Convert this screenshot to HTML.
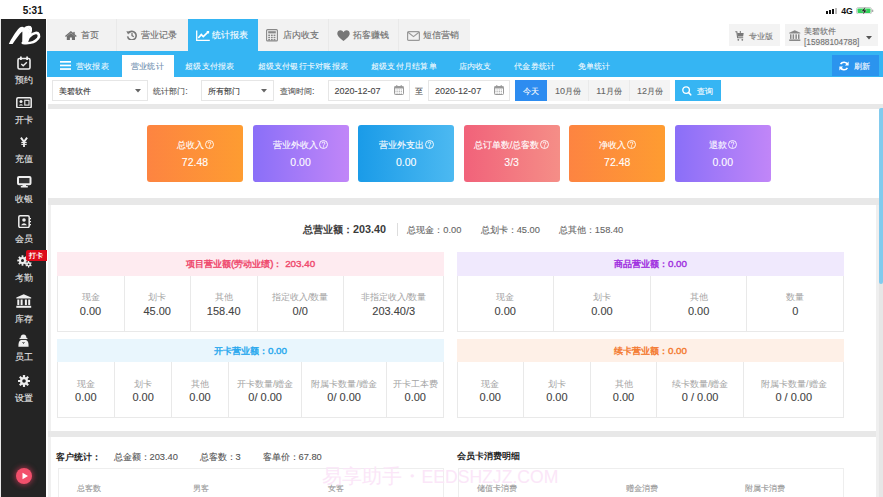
<!DOCTYPE html>
<html><head><meta charset="utf-8"><style>
html,body{margin:0;padding:0;width:883px;height:497px;overflow:hidden;background:#fff;font-family:"Liberation Sans",sans-serif;}
.t{position:absolute;white-space:nowrap;line-height:40px;height:40px;-webkit-text-stroke:0.1px currentColor;}
.r{position:absolute;}
</style></head><body>
<div class="t" style="left:-167.30px;top:-9.05px;width:400px;text-align:center;font-size:10px;color:#111;font-weight:bold;-webkit-text-stroke:0;-webkit-text-stroke:0">5:31</div>
<div class="r" style="left:826.0px;top:11.0px;width:2.10px;height:2.50px;background:#111;"></div>
<div class="r" style="left:829.1px;top:10.0px;width:2.10px;height:3.50px;background:#111;"></div>
<div class="r" style="left:832.2px;top:9.0px;width:2.10px;height:4.50px;background:#111;"></div>
<div class="r" style="left:835.3px;top:7.5px;width:2.10px;height:6.00px;background:#bbb;"></div>
<div class="t" style="left:647.00px;top:-8.85px;width:400px;text-align:center;font-size:8.8px;color:#111;font-weight:bold;-webkit-text-stroke:0;-webkit-text-stroke:0">4G</div>
<svg class="r" style="left:855.5px;top:6.5px" width="18" height="7.5" viewBox="0 0 18 7.5"><rect x="0.5" y="0.5" width="15" height="6.5" rx="1.8" fill="none" stroke="#bbb" stroke-width="0.8"/><rect x="1.5" y="1.5" width="13" height="4.5" rx="0.8" fill="#2fd158"/><rect x="16" y="2.5" width="1.3" height="2.5" rx="0.5" fill="#aaa"/><path d="M9.6 -0.3 L5.3 4.2 L7.8 4.2 L6.6 7.9 L11 3.2 L8.5 3.2 Z" fill="#111" stroke="#fff" stroke-width="0.35"/></svg>
<div class="r" style="left:0px;top:19px;width:1.00px;height:478.00px;background:#e9e9e9;"></div>
<div class="r" style="left:1px;top:19px;width:45.40px;height:478.00px;background:#242424;"></div>
<div class="r" style="left:47px;top:19px;width:423.00px;height:32.00px;background:#f2f2f2;"></div>
<div class="r" style="left:116px;top:19px;width:1.00px;height:32.00px;background:#e9e9e9;"></div>
<div class="r" style="left:188px;top:19px;width:1.00px;height:32.00px;background:#e9e9e9;"></div>
<div class="r" style="left:328px;top:19px;width:1.00px;height:32.00px;background:#e9e9e9;"></div>
<div class="r" style="left:398px;top:19px;width:1.00px;height:32.00px;background:#e9e9e9;"></div>
<div class="r" style="left:188px;top:19px;width:70.00px;height:32.00px;background:#35b5f3;"></div>
<div class="r" style="left:729px;top:24px;width:51.00px;height:22.00px;background:#f3f3f3;"></div>
<div class="r" style="left:785px;top:24px;width:93.00px;height:22.00px;background:#f3f3f3;"></div>
<div class="r" style="left:47px;top:51px;width:836.00px;height:26.00px;background:#35b5f3;"></div>
<div class="r" style="left:121.5px;top:55px;width:52.50px;height:22.00px;background:#ffffff;"></div>
<div class="r" style="left:832px;top:55px;width:47.00px;height:21.00px;background:#2b94ee;"></div>
<div class="r" style="left:47.8px;top:103.5px;width:835.20px;height:5.00px;background:#e8e8e8;"></div>
<div class="r" style="left:47.8px;top:198px;width:830.90px;height:6.50px;background:#e8e8e8;"></div>
<div class="r" style="left:47.8px;top:204.5px;width:3.40px;height:226.50px;background:#f0f0f0;"></div>
<div class="r" style="left:47.8px;top:431px;width:828.20px;height:6.00px;background:#e8e8e8;"></div>
<div class="r" style="left:47.8px;top:437px;width:3.40px;height:60.00px;background:#f0f0f0;"></div>
<div class="r" style="left:876px;top:204.5px;width:2.70px;height:292.50px;background:#efefef;"></div>
<div class="r" style="left:878.7px;top:108.5px;width:4.30px;height:388.50px;background:#e6e6e6;"></div>
<div class="r" style="left:878.7px;top:108.4px;width:4.3px;height:175.6px;background:#82cbee;border-radius:2px 0 2px 2px"></div>
<svg class="r" style="left:0px;top:19px" width="47" height="32" viewBox="0 19 47 32"><path d="M8.8 44.1 C11.3 39, 15.5 31.5, 19.5 27.8 C21.5 26.2, 24.6 26.3, 24.8 29.5 L24.6 43.6 L22.2 43.6 L22.4 31.2 C19.5 34, 15.2 40, 12.6 44 Z" fill="#fff"/><g fill="none" stroke="#fff" stroke-linecap="round" stroke-linejoin="round"><path d="M24 31 C25.3 27.8, 28 26.8, 30 27.6 C31.5 28.6, 30.5 33, 27 40.5" stroke-width="3.2"/><path d="M22.8 43 C28.5 43.6, 35 42.2, 38 38.5 C40 35.5, 38.8 32.6, 35.5 33 C33 33.3, 31 34.8, 29.6 36.4" stroke-width="2.7"/></g><path d="M23.2 29.5 L29.5 28.3 L27.8 40.5 L24.5 43 L23 43 Z" fill="#fff"/></svg>
<div class="t" style="left:-176.00px;top:59.95px;width:400px;text-align:center;font-size:10px;color:#e6e6e6;font-weight:normal;"><span style="font-size:9.20px">预约</span></div>
<div class="t" style="left:-176.00px;top:99.75px;width:400px;text-align:center;font-size:10px;color:#e6e6e6;font-weight:normal;"><span style="font-size:9.20px">开卡</span></div>
<div class="t" style="left:-176.00px;top:138.95px;width:400px;text-align:center;font-size:10px;color:#e6e6e6;font-weight:normal;"><span style="font-size:9.20px">充值</span></div>
<div class="t" style="left:-176.00px;top:178.75px;width:400px;text-align:center;font-size:10px;color:#e6e6e6;font-weight:normal;"><span style="font-size:9.20px">收银</span></div>
<div class="t" style="left:-176.00px;top:219.05px;width:400px;text-align:center;font-size:10px;color:#e6e6e6;font-weight:normal;"><span style="font-size:9.20px">会员</span></div>
<div class="t" style="left:-176.00px;top:258.35px;width:400px;text-align:center;font-size:10px;color:#e6e6e6;font-weight:normal;"><span style="font-size:9.20px">考勤</span></div>
<div class="t" style="left:-176.00px;top:298.85px;width:400px;text-align:center;font-size:10px;color:#e6e6e6;font-weight:normal;"><span style="font-size:9.20px">库存</span></div>
<div class="t" style="left:-176.00px;top:337.25px;width:400px;text-align:center;font-size:10px;color:#e6e6e6;font-weight:normal;"><span style="font-size:9.20px">员工</span></div>
<div class="t" style="left:-176.00px;top:378.25px;width:400px;text-align:center;font-size:10px;color:#e6e6e6;font-weight:normal;"><span style="font-size:9.20px">设置</span></div>
<svg class="r" style="left:17px;top:56px" width="14" height="14" viewBox="0 0 14 14"><rect x="1" y="2.5" width="12" height="10.5" rx="1.5" fill="none" stroke="#eee" stroke-width="1.6"/><rect x="3" y="0.5" width="1.8" height="3.5" fill="#eee"/><rect x="9.2" y="0.5" width="1.8" height="3.5" fill="#eee"/><path d="M4.3 8 L6.2 9.8 L9.8 6.2" fill="none" stroke="#eee" stroke-width="1.4"/></svg>
<svg class="r" style="left:16px;top:96.5px" width="16" height="11.5" viewBox="0 0 16 11.5"><rect x="0.8" y="0.8" width="14.4" height="9.9" rx="1.2" fill="none" stroke="#eee" stroke-width="1.5"/><circle cx="5" cy="4.6" r="1.5" fill="#eee"/><path d="M2.8 8.6 Q5 5.8 7.2 8.6 Z" fill="#eee"/><rect x="8.8" y="3.3" width="4.2" height="4.8" fill="none" stroke="#eee" stroke-width="1.1"/></svg>
<svg class="r" style="left:20px;top:136.5px" width="8" height="10" viewBox="0 0 8 10"><path d="M0.9 0.6 L4 4.8 L7.1 0.6" fill="none" stroke="#eee" stroke-width="1.9"/><rect x="1.3" y="4.9" width="5.4" height="1.1" fill="#eee"/><rect x="1.3" y="6.8" width="5.4" height="1.1" fill="#eee"/><rect x="3.1" y="4.3" width="1.8" height="5.7" fill="#eee"/></svg>
<svg class="r" style="left:17.3px;top:176px" width="14.5" height="11.5" viewBox="0 0 14.5 11.5"><rect x="1" y="1" width="12.5" height="7.3" rx="1" fill="#333" stroke="#eee" stroke-width="2"/><rect x="5.5" y="8.4" width="3.5" height="2" fill="#eee"/><rect x="3.8" y="10" width="7" height="1.5" fill="#eee"/></svg>
<svg class="r" style="left:18px;top:214.5px" width="13" height="13.2" viewBox="0 0 13 13.2"><rect x="0.8" y="0.8" width="10.4" height="11.6" rx="1.3" fill="none" stroke="#eee" stroke-width="1.5"/><circle cx="6" cy="5" r="1.8" fill="#eee"/><path d="M3 10.2 Q6 6.3 9 10.2 Z" fill="#eee"/><rect x="11.5" y="3" width="1.5" height="1.3" fill="#eee"/><rect x="11.5" y="6" width="1.5" height="1.3" fill="#eee"/><rect x="11.5" y="9" width="1.5" height="1.3" fill="#eee"/></svg>
<svg class="r" style="left:16.5px;top:255px" width="15.5" height="13" viewBox="0 0 15.5 13"><g fill="#eee"><circle cx="5.5" cy="5.5" r="3.6"/><rect x="4.6" y="0.3" width="1.8" height="2.6" transform="rotate(0 5.5 5.5)"/><rect x="4.6" y="0.3" width="1.8" height="2.6" transform="rotate(45 5.5 5.5)"/><rect x="4.6" y="0.3" width="1.8" height="2.6" transform="rotate(90 5.5 5.5)"/><rect x="4.6" y="0.3" width="1.8" height="2.6" transform="rotate(135 5.5 5.5)"/><rect x="4.6" y="0.3" width="1.8" height="2.6" transform="rotate(180 5.5 5.5)"/><rect x="4.6" y="0.3" width="1.8" height="2.6" transform="rotate(225 5.5 5.5)"/><rect x="4.6" y="0.3" width="1.8" height="2.6" transform="rotate(270 5.5 5.5)"/><rect x="4.6" y="0.3" width="1.8" height="2.6" transform="rotate(315 5.5 5.5)"/><circle cx="11.6" cy="9.3" r="2.3"/><rect x="11" y="6.0" width="1.2" height="1.8" transform="rotate(0 11.6 9.3)"/><rect x="11" y="6.0" width="1.2" height="1.8" transform="rotate(60 11.6 9.3)"/><rect x="11" y="6.0" width="1.2" height="1.8" transform="rotate(120 11.6 9.3)"/><rect x="11" y="6.0" width="1.2" height="1.8" transform="rotate(180 11.6 9.3)"/><rect x="11" y="6.0" width="1.2" height="1.8" transform="rotate(240 11.6 9.3)"/><rect x="11" y="6.0" width="1.2" height="1.8" transform="rotate(300 11.6 9.3)"/></g><circle cx="5.5" cy="5.5" r="1.5" fill="#232323"/><circle cx="11.6" cy="9.3" r="0.9" fill="#232323"/></svg>
<div class="r" style="left:25.7px;top:249.8px;width:21.00px;height:10.80px;background:#dc0a1a;border-radius:2px 0 0 2px"></div>
<div class="t" style="left:-163.60px;top:236.15px;width:400px;text-align:center;font-size:8px;color:#fff;font-weight:bold;-webkit-text-stroke:0;"><span style="font-size:7.36px">打卡</span></div>
<svg class="r" style="left:16px;top:293.5px" width="15.5" height="14" viewBox="0 0 15.5 14"><path d="M7.75 0.3 L15.2 3.6 L15.2 4.6 L0.3 4.6 L0.3 3.6 Z" fill="#eee"/><rect x="1.3" y="5.5" width="2" height="5.6" fill="#eee"/><rect x="4.6" y="5.5" width="2" height="5.6" fill="#eee"/><rect x="8.9" y="5.5" width="2" height="5.6" fill="#eee"/><rect x="12.2" y="5.5" width="2" height="5.6" fill="#eee"/><rect x="0.3" y="11.8" width="14.9" height="2" fill="#eee"/></svg>
<svg class="r" style="left:18.3px;top:334px" width="11" height="13" viewBox="0 0 11 13"><path d="M2.5 4.5 Q2.5 0.4 5.5 0.4 Q8.5 0.4 8.5 4.5 Z" fill="#eee"/><rect x="1.6" y="3.9" width="7.8" height="1.2" fill="#eee"/><path d="M0.4 12.8 Q0.2 6.8 3 6 L8 6 Q10.8 6.8 10.6 12.8 Z" fill="#eee"/><path d="M4.6 8 L5.5 9.5 L6.4 8" stroke="#232323" stroke-width="0.8" fill="none"/></svg>
<svg class="r" style="left:18px;top:374.5px" width="12" height="12" viewBox="0 0 12 12"><g fill="#eee"><circle cx="6" cy="6" r="4"/><rect x="4.9" y="0" width="2.2" height="3" rx="0.4" transform="rotate(0 6 6)"/><rect x="4.9" y="0" width="2.2" height="3" rx="0.4" transform="rotate(45 6 6)"/><rect x="4.9" y="0" width="2.2" height="3" rx="0.4" transform="rotate(90 6 6)"/><rect x="4.9" y="0" width="2.2" height="3" rx="0.4" transform="rotate(135 6 6)"/><rect x="4.9" y="0" width="2.2" height="3" rx="0.4" transform="rotate(180 6 6)"/><rect x="4.9" y="0" width="2.2" height="3" rx="0.4" transform="rotate(225 6 6)"/><rect x="4.9" y="0" width="2.2" height="3" rx="0.4" transform="rotate(270 6 6)"/><rect x="4.9" y="0" width="2.2" height="3" rx="0.4" transform="rotate(315 6 6)"/></g><circle cx="6" cy="6" r="1.8" fill="#232323"/></svg>
<div class="r" style="left:16px;top:468px;width:16px;height:16px;border-radius:50%;background:#f2506c;box-shadow:0 0 5px 1.5px rgba(240,60,95,0.5)"></div>
<svg class="r" style="left:21px;top:472px" width="8" height="8" viewBox="0 0 8 8"><path d="M1.5 0.8 L7 4 L1.5 7.2 Z" fill="#fff"/></svg>
<div class="t" style="left:-110.50px;top:15.05px;width:400px;text-align:center;font-size:9.8px;color:#6a6a6a;font-weight:normal;"><span style="font-size:9.02px">首页</span></div>
<div class="t" style="left:-40.70px;top:15.05px;width:400px;text-align:center;font-size:9.8px;color:#6a6a6a;font-weight:normal;"><span style="font-size:9.02px">营业记录</span></div>
<div class="t" style="left:29.80px;top:15.05px;width:400px;text-align:center;font-size:9.8px;color:#fff;font-weight:normal;"><span style="font-size:9.02px">统计报表</span></div>
<div class="t" style="left:100.50px;top:15.05px;width:400px;text-align:center;font-size:9.8px;color:#6a6a6a;font-weight:normal;"><span style="font-size:9.02px">店内收支</span></div>
<div class="t" style="left:171.00px;top:15.05px;width:400px;text-align:center;font-size:9.8px;color:#6a6a6a;font-weight:normal;"><span style="font-size:9.02px">拓客赚钱</span></div>
<div class="t" style="left:241.00px;top:15.05px;width:400px;text-align:center;font-size:9.8px;color:#6a6a6a;font-weight:normal;"><span style="font-size:9.02px">短信营销</span></div>
<svg class="r" style="left:64.8px;top:30.6px" width="11.8" height="9.2" viewBox="0 0 11.8 9.2"><path d="M0 4.9 L5.9 0 L11.8 4.9 L10.9 5.9 L5.9 1.8 L0.9 5.9 Z" fill="#6f6f6f"/><path d="M1.8 5.2 L5.9 1.9 L10 5.2 L10 9.2 L6.9 9.2 L6.9 6.6 L4.9 6.6 L4.9 9.2 L1.8 9.2 Z" fill="#6f6f6f"/><rect x="8.3" y="0.9" width="1.4" height="2.6" fill="#6f6f6f"/></svg>
<svg class="r" style="left:126px;top:29.8px" width="11" height="10.5" viewBox="0 0 11 10.5"><path d="M2.3 3.2 A4.3 4.3 0 1 1 1.6 6.4" fill="none" stroke="#777" stroke-width="1.6"/><path d="M0.3 1.2 L3.8 1.6 L2.2 4.6 Z" fill="#777"/><path d="M6 3 L6 5.6 L7.8 6.8" fill="none" stroke="#777" stroke-width="1.3"/></svg>
<svg class="r" style="left:196px;top:29.5px" width="14" height="11" viewBox="0 0 14 11"><path d="M0.7 0.5 L0.7 10.3 L13.8 10.3" fill="none" stroke="#fff" stroke-width="1.3"/><path d="M2.3 8 L5.3 4.6 L7.3 6.6 L12.5 1.6" fill="none" stroke="#fff" stroke-width="1.7"/><path d="M10.3 1.1 L13.2 1 L13 3.9 Z" fill="#fff"/></svg>
<svg class="r" style="left:266px;top:29px" width="12" height="12.5" viewBox="0 0 12 12.5"><rect x="0.6" y="0.6" width="10.8" height="11.3" rx="1" fill="none" stroke="#888" stroke-width="1.1"/><rect x="2.2" y="2.2" width="7.6" height="2.2" fill="#888"/><rect x="2.2" y="5.6" width="1.8" height="1.4" fill="#888"/><rect x="2.2" y="7.8" width="1.8" height="1.4" fill="#888"/><rect x="2.2" y="10.0" width="1.8" height="1.4" fill="#888"/><rect x="4.9" y="5.6" width="1.8" height="1.4" fill="#888"/><rect x="4.9" y="7.8" width="1.8" height="1.4" fill="#888"/><rect x="4.9" y="10.0" width="1.8" height="1.4" fill="#888"/><rect x="7.6" y="5.6" width="1.8" height="1.4" fill="#888"/><rect x="7.6" y="7.8" width="1.8" height="1.4" fill="#888"/><rect x="7.6" y="10.0" width="1.8" height="1.4" fill="#888"/></svg>
<svg class="r" style="left:336.8px;top:29.8px" width="13" height="11.5" viewBox="0 0 13 11.5"><path d="M6.5 11 C3 8 0.3 6 0.3 3.4 C0.3 1.3 1.9 0.3 3.4 0.3 C4.8 0.3 5.9 1.2 6.5 2.2 C7.1 1.2 8.2 0.3 9.6 0.3 C11.1 0.3 12.7 1.3 12.7 3.4 C12.7 6 10 8 6.5 11 Z" fill="#777"/></svg>
<svg class="r" style="left:407px;top:30.5px" width="13" height="10" viewBox="0 0 13 10"><rect x="0.6" y="0.6" width="11.8" height="8.8" rx="1" fill="none" stroke="#999" stroke-width="1.2"/><path d="M1 1.2 L6.5 5.6 L12 1.2" fill="none" stroke="#999" stroke-width="1.2"/></svg>
<svg class="r" style="left:734.8px;top:30.5px" width="9" height="10" viewBox="0 0 9 10"><path d="M0.3 0.8 L1.8 0.8 L2.6 6.8 L8.2 6.8" fill="none" stroke="#777" stroke-width="1.1"/><path d="M2.2 2 L8.7 2 L8.1 5.6 L2.7 5.6 Z" fill="#777"/><rect x="4.8" y="0" width="1" height="2.5" fill="#777"/><circle cx="3.3" cy="8.8" r="0.9" fill="#777"/><circle cx="7.3" cy="8.8" r="0.9" fill="#777"/></svg>
<div class="t" style="left:560.50px;top:16.15px;width:400px;text-align:center;font-size:9px;color:#7a7a7a;font-weight:normal;"><span style="font-size:8.28px">专业版</span></div>
<svg class="r" style="left:789px;top:29.5px" width="11.5" height="11" viewBox="0 0 11.5 11"><path d="M5.75 0.2 L11.3 2.8 L11.3 3.6 L0.2 3.6 L0.2 2.8 Z" fill="#888"/><rect x="1" y="4.3" width="1.5" height="4.6" fill="#888"/><rect x="3.6" y="4.3" width="1.5" height="4.6" fill="#888"/><rect x="6.4" y="4.3" width="1.5" height="4.6" fill="#888"/><rect x="9" y="4.3" width="1.5" height="4.6" fill="#888"/><rect x="0.2" y="9.4" width="11.1" height="1.6" fill="#888"/></svg>
<div class="t" style="left:804.00px;top:11.05px;font-size:9px;color:#707070;font-weight:normal;"><span style="font-size:8.28px">美碧软件</span></div>
<div class="t" style="left:804.00px;top:21.95px;font-size:8.3px;color:#707070;font-weight:normal;">[15988104788]</div>
<svg class="r" style="left:865.5px;top:35.5px" width="6" height="4" viewBox="0 0 6 4"><path d="M0 0 L6 0 L3 3.5 Z" fill="#555"/></svg>
<svg class="r" style="left:60px;top:61px" width="11" height="9" viewBox="0 0 11 9"><rect x="0" y="0" width="11" height="1.7" fill="#fff"/><rect x="0" y="3.6" width="11" height="1.7" fill="#fff"/><rect x="0" y="7.2" width="11" height="1.7" fill="#fff"/></svg>
<div class="t" style="left:-107.50px;top:45.95px;width:400px;text-align:center;font-size:8.7px;color:rgba(255,255,255,0.93);font-weight:normal;letter-spacing:0.22px"><span style="font-size:8.26px">营收报表</span></div>
<div class="t" style="left:-52.70px;top:46.15px;width:400px;text-align:center;font-size:8.7px;color:#6f8fb0;font-weight:normal;letter-spacing:0.22px"><span style="font-size:8.26px">营业统计</span></div>
<div class="t" style="left:9.80px;top:45.95px;width:400px;text-align:center;font-size:8.7px;color:rgba(255,255,255,0.93);font-weight:normal;letter-spacing:0.22px"><span style="font-size:8.26px">超级支付报表</span></div>
<div class="t" style="left:102.80px;top:45.95px;width:400px;text-align:center;font-size:8.7px;color:rgba(255,255,255,0.93);font-weight:normal;letter-spacing:0.22px"><span style="font-size:8.26px">超级支付银行卡对账报表</span></div>
<div class="t" style="left:203.90px;top:45.95px;width:400px;text-align:center;font-size:8.7px;color:rgba(255,255,255,0.93);font-weight:normal;letter-spacing:0.22px"><span style="font-size:8.26px">超级支付月结算单</span></div>
<div class="t" style="left:275.20px;top:45.95px;width:400px;text-align:center;font-size:8.7px;color:rgba(255,255,255,0.93);font-weight:normal;letter-spacing:0.22px"><span style="font-size:8.26px">店内收支</span></div>
<div class="t" style="left:334.70px;top:45.95px;width:400px;text-align:center;font-size:8.7px;color:rgba(255,255,255,0.93);font-weight:normal;letter-spacing:0.22px"><span style="font-size:8.26px">代金券统计</span></div>
<div class="t" style="left:394.00px;top:45.95px;width:400px;text-align:center;font-size:8.7px;color:rgba(255,255,255,0.93);font-weight:normal;letter-spacing:0.22px"><span style="font-size:8.26px">免单统计</span></div>
<svg class="r" style="left:839px;top:60.5px" width="10" height="10" viewBox="0 0 10 10"><path d="M8.6 3.6 A3.9 3.9 0 0 0 1.6 3.2" fill="none" stroke="#fff" stroke-width="1.6"/><path d="M9.6 0.6 L9.6 4.4 L5.9 4.4 Z" fill="#fff"/><path d="M1.4 6.4 A3.9 3.9 0 0 0 8.4 6.8" fill="none" stroke="#fff" stroke-width="1.6"/><path d="M0.4 9.4 L0.4 5.6 L4.1 5.6 Z" fill="#fff"/></svg>
<div class="t" style="left:661.50px;top:46.25px;width:400px;text-align:center;font-size:8.7px;color:#fff;font-weight:normal;"><span style="font-size:8.00px">刷新</span></div>
<div class="r" style="left:52px;top:80px;width:96.00px;height:20.60px;background:#fff;box-sizing:border-box;border:1px solid #e6e6e6"></div>
<div class="t" style="left:58.70px;top:71.25px;font-size:9px;color:#333;font-weight:normal;"><span style="font-size:8.28px">美碧软件</span></div>
<svg class="r" style="left:135px;top:88.8px" width="6" height="4" viewBox="0 0 6 4"><path d="M0 0 L6 0 L3 3.5 Z" fill="#666"/></svg>
<div class="t" style="left:-29.50px;top:71.25px;width:400px;text-align:center;font-size:9px;color:#555;font-weight:normal;"><span style="font-size:8.28px">统计部门</span>:</div>
<div class="r" style="left:201px;top:80px;width:73.00px;height:20.60px;background:#fff;box-sizing:border-box;border:1px solid #e6e6e6"></div>
<div class="t" style="left:207.70px;top:71.25px;font-size:9px;color:#333;font-weight:normal;"><span style="font-size:8.28px">所有部门</span></div>
<svg class="r" style="left:260.5px;top:88.8px" width="6" height="4" viewBox="0 0 6 4"><path d="M0 0 L6 0 L3 3.5 Z" fill="#666"/></svg>
<div class="t" style="left:97.30px;top:71.25px;width:400px;text-align:center;font-size:9px;color:#555;font-weight:normal;"><span style="font-size:8.28px">查询时间</span>:</div>
<div class="r" style="left:327.7px;top:80px;width:82.00px;height:20.60px;background:#fff;box-sizing:border-box;border:1px solid #e6e6e6"></div>
<div class="t" style="left:334.50px;top:71.25px;font-size:9px;color:#444;font-weight:normal;">2020-12-07</div>
<div class="r" style="left:428.4px;top:80px;width:81.90px;height:20.60px;background:#fff;box-sizing:border-box;border:1px solid #e6e6e6"></div>
<div class="t" style="left:435.10px;top:71.25px;font-size:9px;color:#444;font-weight:normal;">2020-12-07</div>
<div class="t" style="left:218.50px;top:71.25px;width:400px;text-align:center;font-size:9px;color:#555;font-weight:normal;"><span style="font-size:8.28px">至</span></div>
<svg class="r" style="left:393.9px;top:85px" width="10" height="10" viewBox="0 0 10 10"><rect x="0.5" y="1.5" width="9" height="8" rx="0.8" fill="none" stroke="#999" stroke-width="1"/><rect x="0.5" y="1.5" width="9" height="2" fill="#999"/><rect x="2.3" y="0" width="1" height="2.5" fill="#999"/><rect x="6.7" y="0" width="1" height="2.5" fill="#999"/><rect x="1.5" y="4.5" width="1" height="0.9" fill="#aaa"/><rect x="1.5" y="6.1" width="1" height="0.9" fill="#aaa"/><rect x="1.5" y="7.7" width="1" height="0.9" fill="#aaa"/><rect x="3.3" y="4.5" width="1" height="0.9" fill="#aaa"/><rect x="3.3" y="6.1" width="1" height="0.9" fill="#aaa"/><rect x="3.3" y="7.7" width="1" height="0.9" fill="#aaa"/><rect x="5.1" y="4.5" width="1" height="0.9" fill="#aaa"/><rect x="5.1" y="6.1" width="1" height="0.9" fill="#aaa"/><rect x="5.1" y="7.7" width="1" height="0.9" fill="#aaa"/><rect x="6.9" y="4.5" width="1" height="0.9" fill="#aaa"/><rect x="6.9" y="6.1" width="1" height="0.9" fill="#aaa"/><rect x="6.9" y="7.7" width="1" height="0.9" fill="#aaa"/></svg>
<svg class="r" style="left:494.2px;top:85px" width="10" height="10" viewBox="0 0 10 10"><rect x="0.5" y="1.5" width="9" height="8" rx="0.8" fill="none" stroke="#999" stroke-width="1"/><rect x="0.5" y="1.5" width="9" height="2" fill="#999"/><rect x="2.3" y="0" width="1" height="2.5" fill="#999"/><rect x="6.7" y="0" width="1" height="2.5" fill="#999"/><rect x="1.5" y="4.5" width="1" height="0.9" fill="#aaa"/><rect x="1.5" y="6.1" width="1" height="0.9" fill="#aaa"/><rect x="1.5" y="7.7" width="1" height="0.9" fill="#aaa"/><rect x="3.3" y="4.5" width="1" height="0.9" fill="#aaa"/><rect x="3.3" y="6.1" width="1" height="0.9" fill="#aaa"/><rect x="3.3" y="7.7" width="1" height="0.9" fill="#aaa"/><rect x="5.1" y="4.5" width="1" height="0.9" fill="#aaa"/><rect x="5.1" y="6.1" width="1" height="0.9" fill="#aaa"/><rect x="5.1" y="7.7" width="1" height="0.9" fill="#aaa"/><rect x="6.9" y="4.5" width="1" height="0.9" fill="#aaa"/><rect x="6.9" y="6.1" width="1" height="0.9" fill="#aaa"/><rect x="6.9" y="7.7" width="1" height="0.9" fill="#aaa"/></svg>
<div class="r" style="left:515.4px;top:80px;width:32.00px;height:20.50px;background:#2d8cf0;"></div>
<div class="t" style="left:331.40px;top:70.95px;width:400px;text-align:center;font-size:9px;color:#fff;font-weight:normal;"><span style="font-size:8.28px">今天</span></div>
<div class="r" style="left:547.4px;top:80px;width:123.00px;height:20.50px;background:#f4f4f4;"></div>
<div class="r" style="left:588.2px;top:80px;width:1.00px;height:20.50px;background:#eaeaea;"></div>
<div class="r" style="left:629.1px;top:80px;width:1.00px;height:20.50px;background:#eaeaea;"></div>
<div class="t" style="left:368.00px;top:70.95px;width:400px;text-align:center;font-size:9px;color:#666;font-weight:normal;">10<span style="font-size:8.28px">月份</span></div>
<div class="t" style="left:409.00px;top:70.95px;width:400px;text-align:center;font-size:9px;color:#666;font-weight:normal;">11<span style="font-size:8.28px">月份</span></div>
<div class="t" style="left:450.00px;top:70.95px;width:400px;text-align:center;font-size:9px;color:#666;font-weight:normal;">12<span style="font-size:8.28px">月份</span></div>
<div class="r" style="left:675.3px;top:80px;width:46.20px;height:20.50px;background:#36b5f3;"></div>
<svg class="r" style="left:681.7px;top:86px" width="10" height="10" viewBox="0 0 10 10"><circle cx="4.1" cy="4.1" r="3.3" fill="none" stroke="#fff" stroke-width="1.35"/><path d="M6.5 6.5 L8.7 8.8" stroke="#fff" stroke-width="1.6" stroke-linecap="round"/></svg>
<div class="t" style="left:504.50px;top:70.95px;width:400px;text-align:center;font-size:8.7px;color:#fff;font-weight:normal;"><span style="font-size:8.00px">查询</span></div>
<div class="r" style="left:147.0px;top:124.8px;width:96.00px;height:57.00px;background:linear-gradient(90deg,#fd8441,#fe9c31);border-radius:3px"></div>
<div class="t" style="left:-5.00px;top:125.15px;width:400px;text-align:center;font-size:9.5px;color:#fff;font-weight:normal;"><span style="font-size:8.74px">总收入</span><svg style="display:inline-block;vertical-align:-1px;margin-left:1px" width="9" height="9" viewBox="0 0 9 9"><circle cx="4.5" cy="4.5" r="4" fill="none" stroke="#fff" stroke-width="0.9"/><path d="M3.2 3.4 Q3.2 2.1 4.5 2.1 Q5.8 2.1 5.8 3.3 Q5.8 4.1 4.9 4.6 Q4.5 4.9 4.5 5.6" fill="none" stroke="#fff" stroke-width="0.9"/><circle cx="4.5" cy="6.9" r="0.55" fill="#fff"/></svg></div>
<div class="t" style="left:-5.00px;top:141.95px;width:400px;text-align:center;font-size:10.5px;color:#fff;font-weight:normal;">72.48</div>
<div class="r" style="left:252.55px;top:124.8px;width:96.00px;height:57.00px;background:linear-gradient(90deg,#8a6ff8,#c186f8);border-radius:3px"></div>
<div class="t" style="left:100.55px;top:125.15px;width:400px;text-align:center;font-size:9.5px;color:#fff;font-weight:normal;"><span style="font-size:8.74px">营业外收入</span><svg style="display:inline-block;vertical-align:-1px;margin-left:1px" width="9" height="9" viewBox="0 0 9 9"><circle cx="4.5" cy="4.5" r="4" fill="none" stroke="#fff" stroke-width="0.9"/><path d="M3.2 3.4 Q3.2 2.1 4.5 2.1 Q5.8 2.1 5.8 3.3 Q5.8 4.1 4.9 4.6 Q4.5 4.9 4.5 5.6" fill="none" stroke="#fff" stroke-width="0.9"/><circle cx="4.5" cy="6.9" r="0.55" fill="#fff"/></svg></div>
<div class="t" style="left:100.55px;top:141.95px;width:400px;text-align:center;font-size:10.5px;color:#fff;font-weight:normal;">0.00</div>
<div class="r" style="left:358.1px;top:124.8px;width:96.00px;height:57.00px;background:linear-gradient(90deg,#1a9be8,#4cb9f1);border-radius:3px"></div>
<div class="t" style="left:206.10px;top:125.15px;width:400px;text-align:center;font-size:9.5px;color:#fff;font-weight:normal;"><span style="font-size:8.74px">营业外支出</span><svg style="display:inline-block;vertical-align:-1px;margin-left:1px" width="9" height="9" viewBox="0 0 9 9"><circle cx="4.5" cy="4.5" r="4" fill="none" stroke="#fff" stroke-width="0.9"/><path d="M3.2 3.4 Q3.2 2.1 4.5 2.1 Q5.8 2.1 5.8 3.3 Q5.8 4.1 4.9 4.6 Q4.5 4.9 4.5 5.6" fill="none" stroke="#fff" stroke-width="0.9"/><circle cx="4.5" cy="6.9" r="0.55" fill="#fff"/></svg></div>
<div class="t" style="left:206.10px;top:141.95px;width:400px;text-align:center;font-size:10.5px;color:#fff;font-weight:normal;">0.00</div>
<div class="r" style="left:463.65px;top:124.8px;width:96.00px;height:57.00px;background:linear-gradient(90deg,#f1627a,#f58e87);border-radius:3px"></div>
<div class="t" style="left:311.65px;top:125.15px;width:400px;text-align:center;font-size:9.5px;color:#fff;font-weight:normal;"><span style="font-size:8.74px">总订单数</span>/<span style="font-size:8.74px">总客数</span><svg style="display:inline-block;vertical-align:-1px;margin-left:1px" width="9" height="9" viewBox="0 0 9 9"><circle cx="4.5" cy="4.5" r="4" fill="none" stroke="#fff" stroke-width="0.9"/><path d="M3.2 3.4 Q3.2 2.1 4.5 2.1 Q5.8 2.1 5.8 3.3 Q5.8 4.1 4.9 4.6 Q4.5 4.9 4.5 5.6" fill="none" stroke="#fff" stroke-width="0.9"/><circle cx="4.5" cy="6.9" r="0.55" fill="#fff"/></svg></div>
<div class="t" style="left:311.65px;top:141.95px;width:400px;text-align:center;font-size:10.5px;color:#fff;font-weight:normal;">3/3</div>
<div class="r" style="left:569.2px;top:124.8px;width:96.00px;height:57.00px;background:linear-gradient(90deg,#fd8441,#fe9c31);border-radius:3px"></div>
<div class="t" style="left:417.20px;top:125.15px;width:400px;text-align:center;font-size:9.5px;color:#fff;font-weight:normal;"><span style="font-size:8.74px">净收入</span><svg style="display:inline-block;vertical-align:-1px;margin-left:1px" width="9" height="9" viewBox="0 0 9 9"><circle cx="4.5" cy="4.5" r="4" fill="none" stroke="#fff" stroke-width="0.9"/><path d="M3.2 3.4 Q3.2 2.1 4.5 2.1 Q5.8 2.1 5.8 3.3 Q5.8 4.1 4.9 4.6 Q4.5 4.9 4.5 5.6" fill="none" stroke="#fff" stroke-width="0.9"/><circle cx="4.5" cy="6.9" r="0.55" fill="#fff"/></svg></div>
<div class="t" style="left:417.20px;top:141.95px;width:400px;text-align:center;font-size:10.5px;color:#fff;font-weight:normal;">72.48</div>
<div class="r" style="left:674.75px;top:124.8px;width:96.00px;height:57.00px;background:linear-gradient(90deg,#8a6ff8,#c186f8);border-radius:3px"></div>
<div class="t" style="left:522.75px;top:125.15px;width:400px;text-align:center;font-size:9.5px;color:#fff;font-weight:normal;"><span style="font-size:8.74px">退款</span><svg style="display:inline-block;vertical-align:-1px;margin-left:1px" width="9" height="9" viewBox="0 0 9 9"><circle cx="4.5" cy="4.5" r="4" fill="none" stroke="#fff" stroke-width="0.9"/><path d="M3.2 3.4 Q3.2 2.1 4.5 2.1 Q5.8 2.1 5.8 3.3 Q5.8 4.1 4.9 4.6 Q4.5 4.9 4.5 5.6" fill="none" stroke="#fff" stroke-width="0.9"/><circle cx="4.5" cy="6.9" r="0.55" fill="#fff"/></svg></div>
<div class="t" style="left:522.75px;top:141.95px;width:400px;text-align:center;font-size:10.5px;color:#fff;font-weight:normal;">0.00</div>
<div class="t" style="left:303.00px;top:209.35px;font-size:10.8px;color:#3a3a3a;font-weight:bold;-webkit-text-stroke:0;"><span style="font-size:10.15px">总营业额：</span>203.40</div>
<div class="r" style="left:396.5px;top:222.5px;width:1.00px;height:13.50px;background:#dddddd;"></div>
<div class="t" style="left:407.30px;top:210.35px;font-size:9.3px;color:#666;font-weight:normal;"><span style="font-size:9.30px">总现金：</span>0.00</div>
<div class="t" style="left:480.70px;top:210.35px;font-size:9.3px;color:#666;font-weight:normal;"><span style="font-size:9.30px">总划卡：</span>45.00</div>
<div class="t" style="left:558.80px;top:210.35px;font-size:9.3px;color:#666;font-weight:normal;"><span style="font-size:9.30px">总其他：</span>158.40</div>
<div class="r" style="left:57px;top:252px;width:387.00px;height:23.50px;background:#feebf0;"></div>
<div class="t" style="left:50.50px;top:244.30px;width:400px;text-align:center;font-size:9.8px;color:#ef4a6e;font-weight:normal;-webkit-text-stroke:0.4px currentColor"><span style="font-size:9.02px">项目营业额</span>(<span style="font-size:9.02px">劳动业绩</span>)<span style="font-size:9.02px">：</span> 203.40</div>
<div class="r" style="left:57px;top:275.5px;width:1.00px;height:56.00px;background:#e9e9e9;"></div>
<div class="r" style="left:443px;top:275.5px;width:1.00px;height:56.00px;background:#e9e9e9;"></div>
<div class="r" style="left:57px;top:330.5px;width:387.00px;height:1.00px;background:#e9e9e9;"></div>
<div class="r" style="left:123.5px;top:275.5px;width:1.00px;height:56.00px;background:#e9e9e9;"></div>
<div class="r" style="left:189.9px;top:275.5px;width:1.00px;height:56.00px;background:#e9e9e9;"></div>
<div class="r" style="left:256.5px;top:275.5px;width:1.00px;height:56.00px;background:#e9e9e9;"></div>
<div class="r" style="left:342.9px;top:275.5px;width:1.00px;height:56.00px;background:#e9e9e9;"></div>
<div class="t" style="left:-109.50px;top:277.15px;width:400px;text-align:center;font-size:9px;color:#a3a3a3;font-weight:normal;-webkit-text-stroke:0"><span style="font-size:8.64px">现金</span></div>
<div class="t" style="left:-109.50px;top:290.75px;width:400px;text-align:center;font-size:11px;color:#444;font-weight:normal;">0.00</div>
<div class="t" style="left:-42.80px;top:277.15px;width:400px;text-align:center;font-size:9px;color:#a3a3a3;font-weight:normal;-webkit-text-stroke:0"><span style="font-size:8.64px">划卡</span></div>
<div class="t" style="left:-42.80px;top:290.75px;width:400px;text-align:center;font-size:11px;color:#444;font-weight:normal;">45.00</div>
<div class="t" style="left:23.70px;top:277.15px;width:400px;text-align:center;font-size:9px;color:#a3a3a3;font-weight:normal;-webkit-text-stroke:0"><span style="font-size:8.64px">其他</span></div>
<div class="t" style="left:23.70px;top:290.75px;width:400px;text-align:center;font-size:11px;color:#444;font-weight:normal;">158.40</div>
<div class="t" style="left:100.20px;top:277.15px;width:400px;text-align:center;font-size:9px;color:#a3a3a3;font-weight:normal;-webkit-text-stroke:0"><span style="font-size:8.64px">指定收入</span>/<span style="font-size:8.64px">数量</span></div>
<div class="t" style="left:100.20px;top:290.75px;width:400px;text-align:center;font-size:11px;color:#444;font-weight:normal;">0/0</div>
<div class="t" style="left:193.70px;top:277.15px;width:400px;text-align:center;font-size:9px;color:#a3a3a3;font-weight:normal;-webkit-text-stroke:0"><span style="font-size:8.64px">非指定收入</span>/<span style="font-size:8.64px">数量</span></div>
<div class="t" style="left:193.70px;top:290.75px;width:400px;text-align:center;font-size:11px;color:#444;font-weight:normal;">203.40/3</div>
<div class="r" style="left:457px;top:252px;width:387.00px;height:23.50px;background:#f0e9fd;"></div>
<div class="t" style="left:450.50px;top:244.30px;width:400px;text-align:center;font-size:9.8px;color:#a030e0;font-weight:normal;-webkit-text-stroke:0.4px currentColor"><span style="font-size:9.02px">商品营业额：</span>0.00</div>
<div class="r" style="left:457px;top:275.5px;width:1.00px;height:56.00px;background:#e9e9e9;"></div>
<div class="r" style="left:843px;top:275.5px;width:1.00px;height:56.00px;background:#e9e9e9;"></div>
<div class="r" style="left:457px;top:330.5px;width:387.00px;height:1.00px;background:#e9e9e9;"></div>
<div class="r" style="left:552.9px;top:275.5px;width:1.00px;height:56.00px;background:#e9e9e9;"></div>
<div class="r" style="left:650.0px;top:275.5px;width:1.00px;height:56.00px;background:#e9e9e9;"></div>
<div class="r" style="left:746.2px;top:275.5px;width:1.00px;height:56.00px;background:#e9e9e9;"></div>
<div class="t" style="left:305.20px;top:277.15px;width:400px;text-align:center;font-size:9px;color:#a3a3a3;font-weight:normal;-webkit-text-stroke:0"><span style="font-size:8.64px">现金</span></div>
<div class="t" style="left:305.20px;top:290.75px;width:400px;text-align:center;font-size:11px;color:#444;font-weight:normal;">0.00</div>
<div class="t" style="left:401.95px;top:277.15px;width:400px;text-align:center;font-size:9px;color:#a3a3a3;font-weight:normal;-webkit-text-stroke:0"><span style="font-size:8.64px">划卡</span></div>
<div class="t" style="left:401.95px;top:290.75px;width:400px;text-align:center;font-size:11px;color:#444;font-weight:normal;">0.00</div>
<div class="t" style="left:498.60px;top:277.15px;width:400px;text-align:center;font-size:9px;color:#a3a3a3;font-weight:normal;-webkit-text-stroke:0"><span style="font-size:8.64px">其他</span></div>
<div class="t" style="left:498.60px;top:290.75px;width:400px;text-align:center;font-size:11px;color:#444;font-weight:normal;">0.00</div>
<div class="t" style="left:595.35px;top:277.15px;width:400px;text-align:center;font-size:9px;color:#a3a3a3;font-weight:normal;-webkit-text-stroke:0"><span style="font-size:8.64px">数量</span></div>
<div class="t" style="left:595.35px;top:290.75px;width:400px;text-align:center;font-size:11px;color:#444;font-weight:normal;">0</div>
<div class="r" style="left:57px;top:338.7px;width:387.00px;height:23.50px;background:#e9f6fd;"></div>
<div class="t" style="left:50.50px;top:331.00px;width:400px;text-align:center;font-size:9.8px;color:#28a8ee;font-weight:normal;-webkit-text-stroke:0.4px currentColor"><span style="font-size:9.02px">开卡营业额：</span>0.00</div>
<div class="r" style="left:57px;top:362.2px;width:1.00px;height:55.30px;background:#e9e9e9;"></div>
<div class="r" style="left:443px;top:362.2px;width:1.00px;height:55.30px;background:#e9e9e9;"></div>
<div class="r" style="left:57px;top:416.5px;width:387.00px;height:1.00px;background:#e9e9e9;"></div>
<div class="r" style="left:114.1px;top:362.2px;width:1.00px;height:55.30px;background:#e9e9e9;"></div>
<div class="r" style="left:171.1px;top:362.2px;width:1.00px;height:55.30px;background:#e9e9e9;"></div>
<div class="r" style="left:228.0px;top:362.2px;width:1.00px;height:55.30px;background:#e9e9e9;"></div>
<div class="r" style="left:301.3px;top:362.2px;width:1.00px;height:55.30px;background:#e9e9e9;"></div>
<div class="r" style="left:386.0px;top:362.2px;width:1.00px;height:55.30px;background:#e9e9e9;"></div>
<div class="t" style="left:-114.20px;top:363.95px;width:400px;text-align:center;font-size:9px;color:#a3a3a3;font-weight:normal;-webkit-text-stroke:0"><span style="font-size:8.64px">现金</span></div>
<div class="t" style="left:-114.20px;top:377.35px;width:400px;text-align:center;font-size:11px;color:#444;font-weight:normal;">0.00</div>
<div class="t" style="left:-56.90px;top:363.95px;width:400px;text-align:center;font-size:9px;color:#a3a3a3;font-weight:normal;-webkit-text-stroke:0"><span style="font-size:8.64px">划卡</span></div>
<div class="t" style="left:-56.90px;top:377.35px;width:400px;text-align:center;font-size:11px;color:#444;font-weight:normal;">0.00</div>
<div class="t" style="left:0.05px;top:363.95px;width:400px;text-align:center;font-size:9px;color:#a3a3a3;font-weight:normal;-webkit-text-stroke:0"><span style="font-size:8.64px">其他</span></div>
<div class="t" style="left:0.05px;top:377.35px;width:400px;text-align:center;font-size:11px;color:#444;font-weight:normal;">0.00</div>
<div class="t" style="left:65.15px;top:363.95px;width:400px;text-align:center;font-size:9px;color:#a3a3a3;font-weight:normal;-webkit-text-stroke:0"><span style="font-size:8.64px">开卡数量</span>/<span style="font-size:8.64px">赠金</span></div>
<div class="t" style="left:65.15px;top:377.35px;width:400px;text-align:center;font-size:11px;color:#444;font-weight:normal;">0/ 0.00</div>
<div class="t" style="left:144.15px;top:363.95px;width:400px;text-align:center;font-size:9px;color:#a3a3a3;font-weight:normal;-webkit-text-stroke:0"><span style="font-size:8.64px">附属卡数量</span>/<span style="font-size:8.64px">赠金</span></div>
<div class="t" style="left:144.15px;top:377.35px;width:400px;text-align:center;font-size:11px;color:#444;font-weight:normal;">0/ 0.00</div>
<div class="t" style="left:215.25px;top:363.95px;width:400px;text-align:center;font-size:9px;color:#a3a3a3;font-weight:normal;-webkit-text-stroke:0"><span style="font-size:8.64px">开卡工本费</span></div>
<div class="t" style="left:215.25px;top:377.35px;width:400px;text-align:center;font-size:11px;color:#444;font-weight:normal;">0.00</div>
<div class="r" style="left:457px;top:338.7px;width:387.00px;height:23.50px;background:#fef0e7;"></div>
<div class="t" style="left:450.50px;top:331.00px;width:400px;text-align:center;font-size:9.8px;color:#f47a30;font-weight:normal;-webkit-text-stroke:0.4px currentColor"><span style="font-size:9.02px">续卡营业额：</span>0.00</div>
<div class="r" style="left:457px;top:362.2px;width:1.00px;height:55.30px;background:#e9e9e9;"></div>
<div class="r" style="left:843px;top:362.2px;width:1.00px;height:55.30px;background:#e9e9e9;"></div>
<div class="r" style="left:457px;top:416.5px;width:387.00px;height:1.00px;background:#e9e9e9;"></div>
<div class="r" style="left:523.0px;top:362.2px;width:1.00px;height:55.30px;background:#e9e9e9;"></div>
<div class="r" style="left:589.7px;top:362.2px;width:1.00px;height:55.30px;background:#e9e9e9;"></div>
<div class="r" style="left:656.3px;top:362.2px;width:1.00px;height:55.30px;background:#e9e9e9;"></div>
<div class="r" style="left:743.0px;top:362.2px;width:1.00px;height:55.30px;background:#e9e9e9;"></div>
<div class="t" style="left:290.25px;top:363.95px;width:400px;text-align:center;font-size:9px;color:#a3a3a3;font-weight:normal;-webkit-text-stroke:0"><span style="font-size:8.64px">现金</span></div>
<div class="t" style="left:290.25px;top:377.35px;width:400px;text-align:center;font-size:11px;color:#444;font-weight:normal;">0.00</div>
<div class="t" style="left:356.85px;top:363.95px;width:400px;text-align:center;font-size:9px;color:#a3a3a3;font-weight:normal;-webkit-text-stroke:0"><span style="font-size:8.64px">划卡</span></div>
<div class="t" style="left:356.85px;top:377.35px;width:400px;text-align:center;font-size:11px;color:#444;font-weight:normal;">0.00</div>
<div class="t" style="left:423.50px;top:363.95px;width:400px;text-align:center;font-size:9px;color:#a3a3a3;font-weight:normal;-webkit-text-stroke:0"><span style="font-size:8.64px">其他</span></div>
<div class="t" style="left:423.50px;top:377.35px;width:400px;text-align:center;font-size:11px;color:#444;font-weight:normal;">0.00</div>
<div class="t" style="left:500.15px;top:363.95px;width:400px;text-align:center;font-size:9px;color:#a3a3a3;font-weight:normal;-webkit-text-stroke:0"><span style="font-size:8.64px">续卡数量</span>/<span style="font-size:8.64px">赠金</span></div>
<div class="t" style="left:500.15px;top:377.35px;width:400px;text-align:center;font-size:11px;color:#444;font-weight:normal;">0 / 0.00</div>
<div class="t" style="left:593.75px;top:363.95px;width:400px;text-align:center;font-size:9px;color:#a3a3a3;font-weight:normal;-webkit-text-stroke:0"><span style="font-size:8.64px">附属卡数量</span>/<span style="font-size:8.64px">赠金</span></div>
<div class="t" style="left:593.75px;top:377.35px;width:400px;text-align:center;font-size:11px;color:#444;font-weight:normal;">0 / 0.00</div>
<div class="t" style="left:56.30px;top:436.75px;font-size:9.5px;color:#222;font-weight:bold;-webkit-text-stroke:0;"><span style="font-size:8.74px">客户统计：</span></div>
<div class="t" style="left:113.50px;top:436.95px;font-size:9.3px;color:#555;font-weight:normal;"><span style="font-size:9.30px">总金额：</span>203.40</div>
<div class="t" style="left:199.50px;top:436.95px;font-size:9.3px;color:#555;font-weight:normal;"><span style="font-size:9.30px">总客数：</span>3</div>
<div class="t" style="left:262.50px;top:436.95px;font-size:9.3px;color:#555;font-weight:normal;"><span style="font-size:9.30px">客单价：</span>67.80</div>
<div class="t" style="left:456.50px;top:436.35px;font-size:9.5px;color:#222;font-weight:bold;-webkit-text-stroke:0;"><span style="font-size:8.74px">会员卡消费明细</span></div>
<div class="r" style="left:57.5px;top:467.5px;width:386.50px;height:29.50px;background:#fff;box-sizing:border-box;border:1px solid #eeeeee;border-bottom:none"></div>
<div class="r" style="left:457.5px;top:467.5px;width:386.50px;height:29.50px;background:#fff;box-sizing:border-box;border:1px solid #eeeeee;border-bottom:none"></div>
<div class="t" style="left:-110.80px;top:468.05px;width:400px;text-align:center;font-size:9px;color:#999;font-weight:normal;"><span style="font-size:8.28px">总客数</span></div>
<div class="t" style="left:1.30px;top:468.05px;width:400px;text-align:center;font-size:9px;color:#999;font-weight:normal;"><span style="font-size:8.28px">男客</span></div>
<div class="t" style="left:135.80px;top:468.05px;width:400px;text-align:center;font-size:9px;color:#999;font-weight:normal;"><span style="font-size:8.28px">女客</span></div>
<div class="t" style="left:297.30px;top:467.75px;width:400px;text-align:center;font-size:9px;color:#999;font-weight:normal;"><span style="font-size:8.28px">储值卡消费</span></div>
<div class="t" style="left:442.20px;top:467.75px;width:400px;text-align:center;font-size:9px;color:#999;font-weight:normal;"><span style="font-size:8.28px">赠金消费</span></div>
<div class="t" style="left:565.00px;top:467.75px;width:400px;text-align:center;font-size:9px;color:#999;font-weight:normal;"><span style="font-size:8.28px">附属卡消费</span></div>
<div class="t" style="left:321.50px;top:456.35px;font-size:17.6px;color:#fbe6f8;font-weight:normal;-webkit-text-stroke:0"><span style="font-size:19.89px">易享助手・</span>EEDSHZJZ.COM</div>
</body></html>
